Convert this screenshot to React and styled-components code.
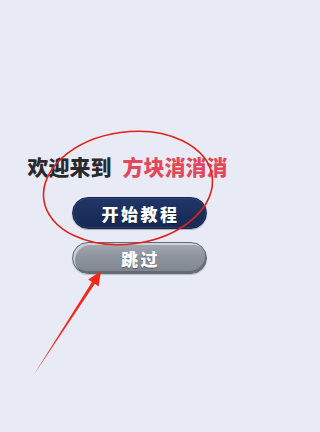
import React from "react";
import styled, { createGlobalStyle } from "styled-components";

const Global = createGlobalStyle`
  html, body { margin: 0; padding: 0; background: #e8ebf5; }
  * { box-sizing: border-box; }
`;

const Screen = styled.div`
  position: relative;
  width: 270px;
  height: 432px;
  overflow: hidden;
  background: #e8ebf5;
  display: flex;
  flex-direction: column;
  align-items: center;
  padding-top: 153px;
  font-family: "Noto Sans CJK SC", "Noto Sans", sans-serif;
`;

const Title = styled.h1`
  margin: 0 15px 0 0;
  font-size: 21px;
  line-height: 26px;
  font-weight: 900;
  color: #2a2a2c;
  white-space: nowrap;
`;

const Accent = styled.span`
  color: #e2485a;
  margin-left: 11px;
`;

const Buttons = styled.div`
  margin: 18px 0 0 9px;
  display: flex;
  flex-direction: column;
  gap: 13px;
`;

const Pill = styled.button`
  width: 135px;
  height: 32px;
  border-radius: 16px;
  font-family: inherit;
  font-size: 17px;
  font-weight: 900;
  letter-spacing: 2.5px;
  color: #ffffff;
  display: flex;
  align-items: center;
  justify-content: center;
  padding: 0 0 0 2px;
  cursor: pointer;
  border: 1px solid ${(p) => (p.$variant === "grey" ? "#656b76" : "#142449")};
  background: ${(p) =>
    p.$variant === "grey"
      ? "linear-gradient(180deg, #a4a9b3 0%, #8e949f 45%, #80868f 100%)"
      : "linear-gradient(180deg, #213667 0%, #1b2f5d 50%, #172953 100%)"};
  box-shadow: ${(p) =>
    p.$variant === "grey"
      ? "inset 2px 2px 0 rgba(222,226,232,0.75), inset -1px -2px 0 rgba(80,86,98,0.6), 0 1px 1px rgba(0,0,0,0.2)"
      : "inset 0 0 0 1px rgba(70,90,140,0.55), inset 0 -1px 0 rgba(10,20,45,0.6), 0 1px 1px rgba(0,0,0,0.25)"};
  text-shadow: 0 1px 1px rgba(0, 0, 0, 0.35);
`;

const Overlay = styled.svg`
  position: absolute;
  left: 0;
  top: 0;
  width: 270px;
  height: 432px;
  pointer-events: none;
`;

export default function App() {
  return (
    <>
      <Global />
      <Screen>
        <Title>
          欢迎来到<Accent>方块消消消</Accent>
        </Title>
        <Buttons>
          <Pill>开始教程</Pill>
          <Pill $variant="grey">跳过</Pill>
        </Buttons>
        <Overlay viewBox="0 0 270 432">
          <ellipse
            cx="128"
            cy="188"
            rx="85"
            ry="56"
            fill="none"
            stroke="#e0221c"
            strokeWidth="1.6"
            transform="rotate(-8 128 188)"
          />
          <polygon
            points="101,271 98.6,286.5 94.9,283.8 33,376 92,282 88.2,279.4"
            fill="#ee2a1e"
          />
        </Overlay>
      </Screen>
    </>
  );
}
